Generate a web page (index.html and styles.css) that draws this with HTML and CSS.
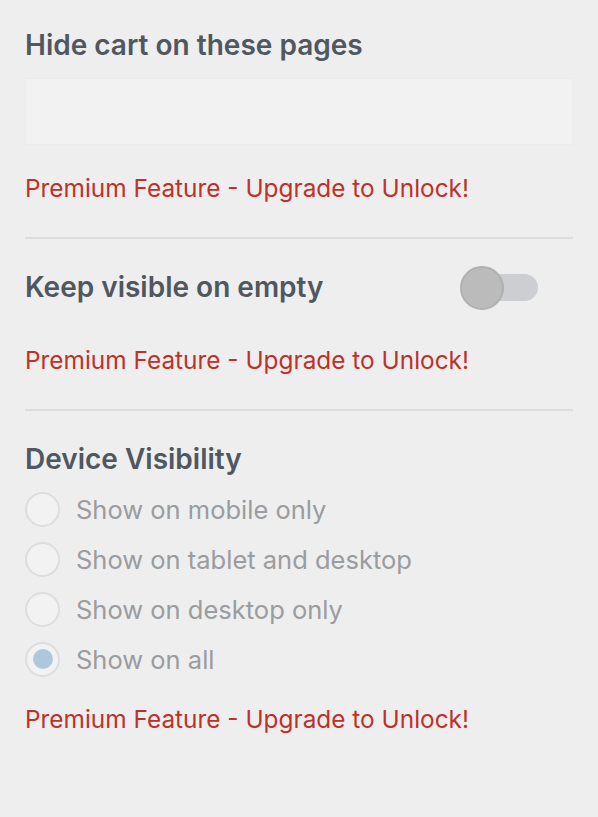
FILE: index.html
```html
<!DOCTYPE html>
<html>
<head>
<meta charset="utf-8">
<link rel="stylesheet" href="styles.css">
</head>
<body>
<div class="panel">
  <section class="section">
    <h2 class="title">Hide cart on these pages</h2>
    <div class="input"></div>
    <p class="premium">Premium Feature - Upgrade to Unlock!</p>
  </section>
  <section class="section">
    <div class="row">
      <h2 class="title">Keep visible on empty</h2>
      <span class="toggle"><span class="knob"></span></span>
    </div>
    <p class="premium spaced">Premium Feature - Upgrade to Unlock!</p>
  </section>
  <section class="section last">
    <h2 class="title">Device Visibility</h2>
    <ul class="radios">
      <li class="radio"><span class="dot"></span>Show on mobile only</li>
      <li class="radio"><span class="dot"></span>Show on tablet and desktop</li>
      <li class="radio"><span class="dot"></span>Show on desktop only</li>
      <li class="radio"><span class="dot checked"></span>Show on all</li>
    </ul>
    <p class="premium after-radios">Premium Feature - Upgrade to Unlock!</p>
  </section>
</div>
</body>
</html>
```
FILE: styles.css
```css
html, body {
  margin: 0;
  padding: 0;
  background: #eeeeee;
}
body {
  font-family: Inter, "Liberation Sans", sans-serif;
  width: 598px;
  height: 817px;
}
.panel {
  padding: 27px 25px 0 25px;
}
.section {
  border-bottom: 2px solid #dcdcdc;
  padding-bottom: 34px;
  margin-bottom: 30px;
}
.section.last {
  border-bottom: none;
}
.title {
  margin: 0;
  font-size: 28px;
  font-weight: 600;
  color: #50575e;
  line-height: 36px;
}
.input {
  margin-top: 15px;
  height: 67px;
  background: #f2f2f2;
  border: 1px solid #ebebeb;
  box-sizing: border-box;
}
.premium {
  margin: 28px 0 0 0;
  font-size: 24.4px;
  line-height: 30px;
  color: #c0302a;
}
.premium.spaced {
  margin-top: 40px;
}
.premium.after-radios {
  margin-top: 20px;
}
.row {
  display: flex;
  align-items: center;
  justify-content: space-between;
  padding-right: 35px;
}
.toggle {
  position: relative;
  width: 58px;
  height: 27px;
  border-radius: 14px;
  background: #ccced2;
}
.knob {
  position: absolute;
  left: -20px;
  top: -8px;
  width: 40px;
  height: 40px;
  border-radius: 50%;
  background: #bbbbbb;
  border: 2px solid #b0b0b0;
}
.radios {
  list-style: none;
  margin: 7px 0 0 0;
  padding: 0;
}
.radio {
  display: flex;
  align-items: center;
  height: 50px;
  font-size: 25.5px;
  color: #9a9c9f;
}
.dot {
  width: 31px;
  height: 31px;
  border-radius: 50%;
  border: 2px solid #dddddd;
  background: #f2f2f2;
  margin-right: 16px;
  display: flex;
  align-items: center;
  justify-content: center;
}
.dot.checked::after {
  content: "";
  width: 20px;
  height: 20px;
  border-radius: 50%;
  background: #adc8dc;
}
```
